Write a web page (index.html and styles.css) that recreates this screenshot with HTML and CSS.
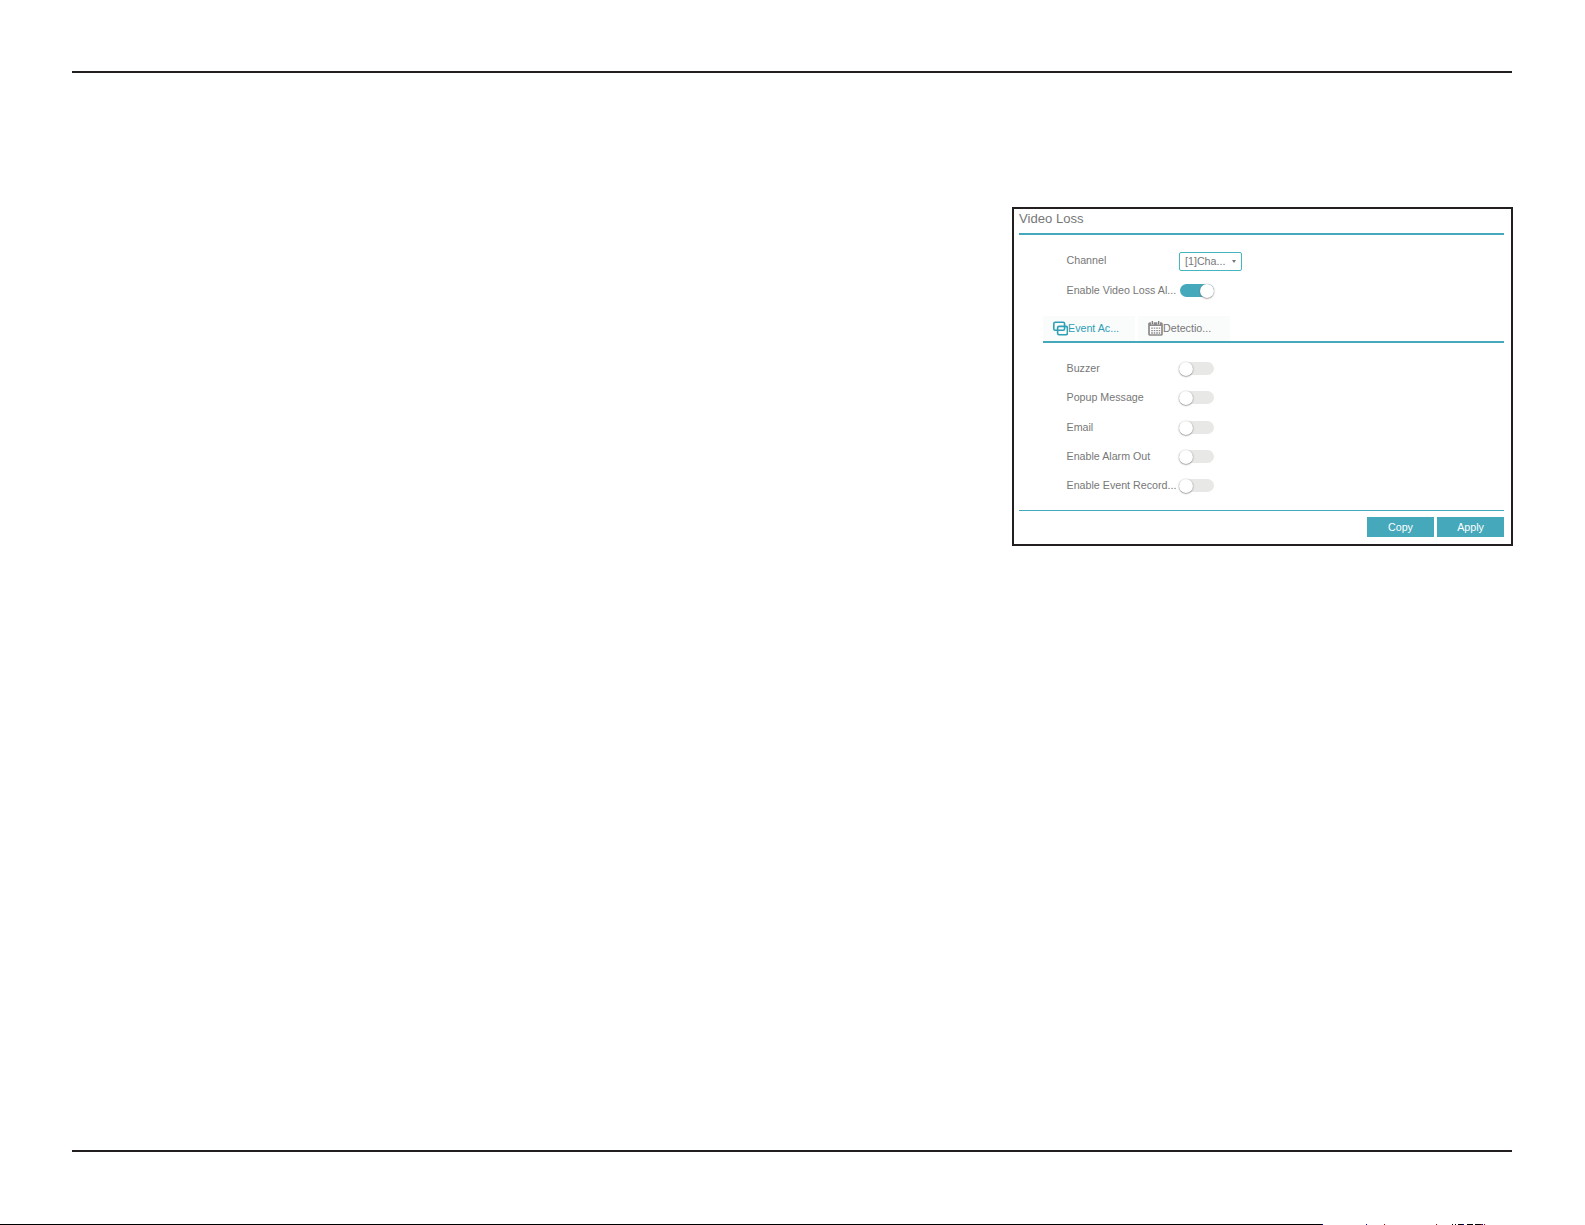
FILE: index.html
```html
<!DOCTYPE html>
<html lang="en">
<head>
<meta charset="utf-8">
<title>Video Loss</title>
<link rel="stylesheet" href="styles.css">
</head>
<body>
<main class="page">
  <section class="panel">
    <h1 class="title">Video Loss</h1>
    <div class="settings">
      <div class="row row-channel"><span class="label">Channel</span><div class="select"><span>[1]Cha...</span><i class="caret"></i></div></div>
      <div class="row row-enable"><span class="label">Enable Video Loss Al...</span><span class="toggle on"></span></div>
    </div>
    <nav class="tabs">
      <div class="tab active">
        <svg class="icon" width="15" height="15" viewBox="0 0 15 15" fill="none" stroke="currentColor" stroke-width="1.6"><rect x="0.8" y="1.2" width="10.8" height="8" rx="1.5"/><rect x="4.6" y="5.4" width="9.8" height="8.4" rx="1.5"/></svg><span>Event Ac...</span>
      </div>
      <div class="tab">
        <svg class="icon" width="15" height="15" viewBox="0 0 15 15"><rect x="1" y="2" width="13" height="12" rx="1" fill="#fff" stroke="#8b8b8b" stroke-width="1.7"/><path d="M1 2h13v3H1z" fill="#8b8b8b"/><path d="M4.3 0v3.5M10.7 0v3.5" stroke="#fff" stroke-width="2.6"/><path d="M4.3 0v3.5M10.7 0v3.5" stroke="#777" stroke-width="1.3"/><path d="M3.2 7.2h9M3.2 9.6h9M3.2 12h9" stroke="#8b8b8b" stroke-width="1.3" stroke-dasharray="1.6 0.9"/></svg><span>Detectio...</span>
      </div>
    </nav>
    <div class="actions">
      <div class="row"><span class="label">Buzzer</span><span class="toggle"></span></div>
      <div class="row"><span class="label">Popup Message</span><span class="toggle"></span></div>
      <div class="row"><span class="label">Email</span><span class="toggle"></span></div>
      <div class="row"><span class="label">Enable Alarm Out</span><span class="toggle"></span></div>
      <div class="row"><span class="label">Enable Event Record...</span><span class="toggle"></span></div>
    </div>
    <footer class="buttons"><button class="button">Copy</button><button class="button">Apply</button></footer>
  </section>
</main>
<div class="edge">
  <svg width="1585" height="1" shape-rendering="crispEdges"><path d="M0 0h1322v1H0zM1452 0h1v1h-1zM1455 0h1v1h-1zM1458 0h5v1h-5zM1467 0h6v1h-6zM1475 0h6v1h-6z"/><path fill="#0000c8" d="M1322 0h1v1h-1zM1366 0h1v1h-1zM1463 0h1v1h-1zM1482 0h1v1h-1z"/><path fill="#b00000" d="M1384 0h1v1h-1zM1436 0h1v1h-1zM1481 0h1v1h-1zM1484 0h1v1h-1z"/></svg>
</div>
</body>
</html>
```
FILE: styles.css
```css
* { box-sizing: border-box; }
body {
  margin: 0;
  height: 1225px;
  overflow: hidden;
  display: flex;
  flex-direction: column;
  background: #fff;
  font-family: "Liberation Sans", Arial, sans-serif;
  font-size: 10.7px;
  color: #777;
}
.page {
  width: 1440px;
  height: 1081px;
  margin: 71px 0 0 72px;
  padding-top: 134px;
  border-top: 2px solid #231f20;
  border-bottom: 2px solid #231f20;
}
.panel {
  width: 501px;
  height: 339px;
  margin-left: 940px;
  padding: 0 7px 0 5px;
  border: 2px solid #231f20;
  display: flex;
  flex-direction: column;
}
.title {
  height: 26px;
  margin: 0;
  border-bottom: 2px solid #45a9bb;
  font-size: 13.1px;
  font-weight: 400;
  line-height: 20px;
}
.settings { height: 81px; padding-top: 17px; }
.row { display: flex; padding-left: 47.5px; height: 29.3px; }
.label { width: 112.5px; line-height: 14px; white-space: nowrap; }
.row-channel { height: 31px; }
.row-channel .label { line-height: 17px; }
.select {
  width: 63px;
  height: 19px;
  padding: 0 5px;
  border: 1px solid #45b5c0;
  border-radius: 2px;
  display: flex;
  align-items: center;
  justify-content: space-between;
  line-height: 12px;
  white-space: nowrap;
}
.select span { padding-bottom: 2px; }
.caret {
  border: 2.5px solid transparent;
  border-top: 3px solid #777;
  border-bottom: 0;
}
.toggle {
  width: 34px;
  height: 13px;
  margin: 1px 0 0 1px;
  border-radius: 7px;
  background: #e8e8e6;
}
.toggle::before {
  content: "";
  display: block;
  width: 14px;
  height: 14px;
  margin-left: -1px;
  border-radius: 50%;
  background: #fff;
  box-shadow: 0 0.5px 1.5px #666;
}
.toggle.on { background: #45a9bb; }
.toggle.on::before { margin-left: 20px; }
.tabs {
  height: 27px;
  margin-left: 24px;
  border-bottom: 2px solid #45a9bb;
  display: flex;
  gap: 3px;
  font-size: 10.7px;
}
.tab {
  width: 92px;
  padding: 0 0 0 10px;
  background: #fafbfb;
  display: flex;
  align-items: center;
  white-space: nowrap;
}
.tab span { padding-bottom: 2px; }
.tab.active { color: #2da0b5; }
.icon { flex: none; }
.actions { height: 167px; padding-top: 18px; }
.buttons {
  height: 27px;
  padding-top: 6px;
  border-top: 1px solid #45a9bb;
  display: flex;
  justify-content: flex-end;
  gap: 3px;
}
.button {
  width: 67px;
  height: 20px;
  padding: 0;
  border: 0;
  background: #45a9bb;
  color: #fff;
  font: 10.7px "Liberation Sans", Arial, sans-serif;
}
.edge { margin-top: auto; height: 1px; }
.edge svg { display: block; }
```
